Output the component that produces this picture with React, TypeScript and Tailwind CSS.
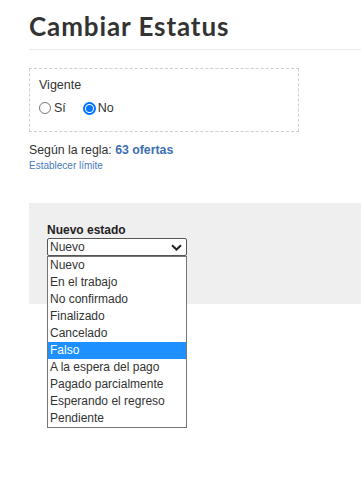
import React from "react";

const options = [
  "Nuevo",
  "En el trabajo",
  "No confirmado",
  "Finalizado",
  "Cancelado",
  "Falso",
  "A la espera del pago",
  "Pagado parcialmente",
  "Esperando el regreso",
  "Pendiente",
];

function Radio({ checked }: { checked?: boolean }) {
  if (checked) {
    return (
      <span className="inline-flex h-[13px] w-[13px] items-center justify-center rounded-full border-[2px] border-[#0075ff] bg-white">
        <span className="h-[7px] w-[7px] rounded-full bg-[#0075ff]" />
      </span>
    );
  }
  return <span className="inline-block h-[12px] w-[12px] rounded-full border border-[#767676] bg-white" />;
}

export default function App() {
  return (
    <div className="min-h-[479px] bg-white pl-[29px] font-['Liberation_Sans',Arial,sans-serif] text-[#333]">
      <h1 className="pt-[11px] pb-[8px] font-['Lato',sans-serif] text-[26px] font-bold leading-[30px] tracking-[0.9px] text-[#333]">
        Cambiar Estatus
      </h1>
      <div className="h-px bg-[#ebebeb]" />
      <div className="mt-[18px] h-[64px] w-[270px] border border-dashed border-[#cfcfcf] px-[9px] pt-[8px]">
        <div className="text-[12.5px] leading-[16px]">Vigente</div>
        <div className="mt-[7px] flex items-center text-[12.5px] leading-[16px]">
          <Radio />
          <span className="ml-[3px]">Sí</span>
          <span className="ml-[17px]" />
          <Radio checked />
          <span className="ml-[2px]">No</span>
        </div>
      </div>
      <div className="mt-[10px] text-[12.3px] leading-[16px]">
        Según la regla: <b className="text-[#3b6fb4]">63 ofertas</b>
      </div>
      <div className="mt-[2px] text-[10px] leading-[12px] text-[#4a7bbd]">Establecer límite</div>
      <div className="mt-[31px] h-[101px] bg-[#efefef] pl-[18px] pt-[19px]">
        <div className="text-[12px] font-bold leading-[16px] text-[#222]">Nuevo estado</div>
        <div className="relative w-[140px]">
          <div className="flex h-[18px] items-center justify-between rounded-[2px] border border-[#555] bg-white pl-[2px] pr-[4px] text-[12px] leading-[16px]">
            <span>Nuevo</span>
            <svg width="11" height="7" viewBox="0 0 11 7" fill="none">
              <path d="M1 1.2 L5.5 5.5 L10 1.2" stroke="#222" strokeWidth="2" />
            </svg>
          </div>
          <div className="absolute left-0 top-full z-10 w-[140px] border border-[#767676] bg-white">
            {options.map((o) => (
              <div
                key={o}
                className={
                  o === "Falso"
                    ? "h-[17px] bg-[#1e90ff] pl-[2px] text-[12px] leading-[17px] text-white"
                    : "h-[17px] pl-[2px] text-[12px] leading-[17px] text-[#333]"
                }
              >
                {o}
              </div>
            ))}
          </div>
        </div>
      </div>
    </div>
  );
}
